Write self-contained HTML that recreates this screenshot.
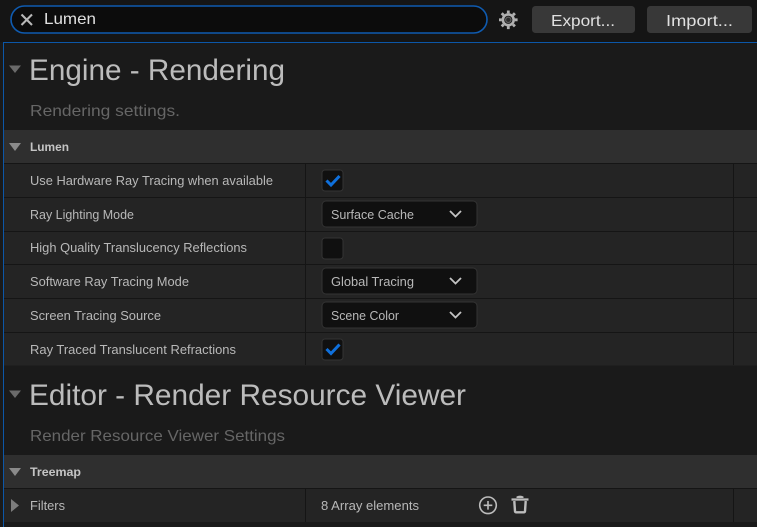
<!DOCTYPE html>
<html><head><meta charset="utf-8"><style>
html,body{margin:0;padding:0;background:#1a1a1a;width:757px;height:527px;overflow:hidden}
svg{display:block}
text{font-family:"Liberation Sans",sans-serif;white-space:pre}
.h{font-size:30px;fill:#bcbcbc}
.s{font-size:16px;fill:#666}
.c{font-size:12px;font-weight:bold;fill:#c4c4c4}
.r{font-size:12.5px;fill:#b8b8b8}
.b{font-size:16px;fill:#e0e0e0}
</style></head><body>
<svg width="757" height="527" viewBox="0 0 757 527" xmlns="http://www.w3.org/2000/svg">
<rect width="757" height="527" fill="#1a1a1a"/>
<rect width="757" height="42" fill="#151515"/>

<!-- search -->
<rect x="11" y="6" width="476" height="27" rx="13.5" fill="#0c0c0c" stroke="#0f5bb0" stroke-width="1.6"/>
<path d="M21.500 14.500L32 25M32 14.500L21.500 25" stroke="#b8b8b8" stroke-width="2.100" fill="none"/>
<text x="44" y="24" class="b" textLength="52" lengthAdjust="spacingAndGlyphs">Lumen</text>

<!-- gear -->
<g transform="translate(508.300 19.800)">
<circle r="5.400" fill="none" stroke="#b0b0b0" stroke-width="2.600"/>
<circle r="2.700" fill="#2a2a2a" stroke="#5e5e5e" stroke-width="1.200"/>
<g stroke="#b0b0b0" stroke-width="2.800">
<path d="M0-9.300V-6.500M0 6.500V9.300M-9.300 0H-6.500M6.500 0H9.300M-6.600-6.600L-4.700-4.700M4.700 4.700L6.600 6.600M-6.600 6.600L-4.700 4.700M4.700-4.700L6.600-6.600"/>
</g>
</g>

<!-- buttons -->
<rect x="532" y="6" width="103" height="27" rx="3.500" fill="#383838"/>
<rect x="647" y="6" width="105" height="27" rx="3.500" fill="#383838"/>
<text x="551" y="26" class="b" textLength="64" lengthAdjust="spacingAndGlyphs">Export...</text>
<text x="666" y="26" class="b" textLength="67" lengthAdjust="spacingAndGlyphs">Import...</text>

<!-- panel border -->
<rect x="3" y="42" width="754" height="1" fill="#0c57a8"/>
<rect x="3" y="42" width="1" height="485" fill="#0c57a8"/>

<!-- section 1 -->
<path d="M9 65.500H21L15 73Z" fill="#6a6a6a"/>
<text x="29" y="80" class="h" textLength="256" lengthAdjust="spacingAndGlyphs">Engine - Rendering</text>
<text x="30" y="116" class="s" textLength="150" lengthAdjust="spacingAndGlyphs">Rendering settings.</text>

<rect x="4" y="130" width="753" height="33" fill="#2f2f2f"/>
<path d="M9 143H21L15 151Z" fill="#8a8a8a"/>
<text x="30" y="151" class="c" textLength="39" lengthAdjust="spacingAndGlyphs">Lumen</text>

<rect x="4" y="163" width="753" height="202.500" fill="#242424"/>
<g fill="#151515">
<rect x="4" y="163" width="753" height="1"/>
<rect x="4" y="197" width="753" height="1"/>
<rect x="4" y="231" width="753" height="1"/>
<rect x="4" y="264" width="753" height="1"/>
<rect x="4" y="298" width="753" height="1"/>
<rect x="4" y="332" width="753" height="1"/>
<rect x="305" y="163" width="1" height="202"/>
<rect x="733" y="163" width="1" height="202"/>
</g>

<text x="30" y="185" class="r" textLength="243" lengthAdjust="spacingAndGlyphs">Use Hardware Ray Tracing when available</text>
<text x="30" y="219" class="r" textLength="104" lengthAdjust="spacingAndGlyphs">Ray Lighting Mode</text>
<text x="30" y="252" class="r" textLength="217" lengthAdjust="spacingAndGlyphs">High Quality Translucency Reflections</text>
<text x="30" y="286" class="r" textLength="159" lengthAdjust="spacingAndGlyphs">Software Ray Tracing Mode</text>
<text x="30" y="320" class="r" textLength="131" lengthAdjust="spacingAndGlyphs">Screen Tracing Source</text>
<text x="30" y="354" class="r" textLength="206" lengthAdjust="spacingAndGlyphs">Ray Traced Translucent Refractions</text>

<!-- checkboxes -->
<g fill="#101010" stroke="#333" stroke-width="1">
<rect x="322" y="170" width="21" height="21" rx="3"/>
<rect x="322" y="238" width="21" height="21" rx="3"/>
<rect x="322" y="339" width="21" height="21" rx="3"/>
</g>
<path d="M326.500 180.500L331 185L339.500 176" fill="none" stroke="#0f70dc" stroke-width="3"/>
<path d="M326.500 349L331 353.500L339.500 344.500" fill="none" stroke="#0f70dc" stroke-width="3"/>

<!-- dropdowns -->
<g fill="#101010" stroke="#333" stroke-width="1">
<rect x="322" y="201" width="155" height="26" rx="4"/>
<rect x="322" y="268" width="155" height="26" rx="4"/>
<rect x="322" y="302" width="155" height="26" rx="4"/>
</g>
<text x="331" y="219" class="r" textLength="83" lengthAdjust="spacingAndGlyphs">Surface Cache</text>
<text x="331" y="286" class="r" textLength="83" lengthAdjust="spacingAndGlyphs">Global Tracing</text>
<text x="331" y="320" class="r" textLength="68" lengthAdjust="spacingAndGlyphs">Scene Color</text>
<g fill="none" stroke="#c4c4c4" stroke-width="1.800">
<path d="M450 211L455.500 216.500L461 211"/>
<path d="M450 278L455.500 283.500L461 278"/>
<path d="M450 312L455.500 317.500L461 312"/>
</g>

<!-- section 2 -->
<path d="M9 390.500H21L15 398Z" fill="#6a6a6a"/>
<text x="29" y="405" class="h" textLength="437" lengthAdjust="spacingAndGlyphs">Editor - Render Resource Viewer</text>
<text x="30" y="441" class="s" textLength="255" lengthAdjust="spacingAndGlyphs">Render Resource Viewer Settings</text>

<rect x="4" y="455" width="753" height="33" fill="#2f2f2f"/>
<path d="M9 468H21L15 476Z" fill="#8a8a8a"/>
<text x="30" y="476" class="c" textLength="51" lengthAdjust="spacingAndGlyphs">Treemap</text>

<rect x="4" y="488" width="753" height="34" fill="#242424"/>
<rect x="4" y="488" width="753" height="1" fill="#151515"/>
<rect x="305" y="488" width="1" height="34" fill="#151515"/>
<rect x="733" y="488" width="1" height="34" fill="#151515"/>
<path d="M11 499V512L19 505.500Z" fill="#7c7c7c"/>
<text x="30" y="510" class="r" textLength="35" lengthAdjust="spacingAndGlyphs">Filters</text>
<text x="321" y="510" class="r" textLength="98" lengthAdjust="spacingAndGlyphs">8 Array elements</text>

<!-- plus -->
<circle cx="488" cy="505.300" r="8.300" fill="none" stroke="#bcbcbc" stroke-width="1.600"/>
<path d="M488 501V509.600M483.700 505.300H492.300" stroke="#bcbcbc" stroke-width="1.600"/>
<!-- trash -->
<path d="M511.500 499.500H528.500" stroke="#bcbcbc" stroke-width="2.200"/>
<path d="M516.500 498V496.500Q520 494.800 523.500 496.500V498Z" fill="#bcbcbc"/>
<path d="M514.300 501L515 511.300Q515.200 512.300 516.200 512.300H523.800Q524.800 512.300 525 511.300L525.700 501" fill="none" stroke="#bcbcbc" stroke-width="2.400"/>
</svg>
</body></html>
